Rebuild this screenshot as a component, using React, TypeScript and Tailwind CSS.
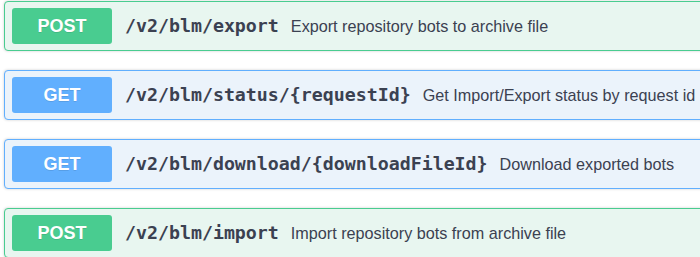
import React from 'react';

type Method = 'POST' | 'GET';

interface Operation {
  method: Method;
  path: string;
  summary: string;
}

const operations: Operation[] = [
  { method: 'POST', path: '/v2/blm/export', summary: 'Export repository bots to archive file' },
  { method: 'GET', path: '/v2/blm/status/{requestId}', summary: 'Get Import/Export status by request id' },
  { method: 'GET', path: '/v2/blm/download/{downloadFileId}', summary: 'Download exported bots' },
  { method: 'POST', path: '/v2/blm/import', summary: 'Import repository bots from archive file' },
];

const styles = {
  POST: { block: 'border-[#49cc90] bg-[#e8f6f0]', badge: 'bg-[#49cc90]' },
  GET: { block: 'border-[#61affe] bg-[#ebf3fb]', badge: 'bg-[#61affe]' },
};

const OpBlock: React.FC<{ op: Operation }> = ({ op }) => {
  const s = styles[op.method];
  return (
    <div
      className={`flex items-center h-[50px] border rounded-[4px] pl-[7px] shadow-[0_0_3px_rgba(0,0,0,0.19)] ${s.block}`}
    >
      <span
        className={`flex items-center justify-center w-[100px] h-[36px] rounded-[3px] text-white text-[18px] font-bold font-['Liberation_Sans',Arial,sans-serif] [text-shadow:0_1px_0_rgba(0,0,0,0.1)] ${s.badge}`}
      >
        {op.method}
      </span>
      <span className="ml-[13px] text-[18.25px] font-bold text-[#3b4151] font-['DejaVu_Sans_Mono',monospace] whitespace-nowrap">
        {op.path}
      </span>
      <span className="ml-[12px] text-[16.2px] text-[#3b4151] font-['Liberation_Sans',Arial,sans-serif] whitespace-nowrap">
        {op.summary}
      </span>
    </div>
  );
};

export default function App() {
  return (
    <div className="w-[700px] h-[257px] overflow-hidden bg-white">
      <div className="w-[740px] pl-[4px] pt-[1px] flex flex-col gap-[19px]">
        {operations.map((op) => (
          <OpBlock key={op.path} op={op} />
        ))}
      </div>
    </div>
  );
}
